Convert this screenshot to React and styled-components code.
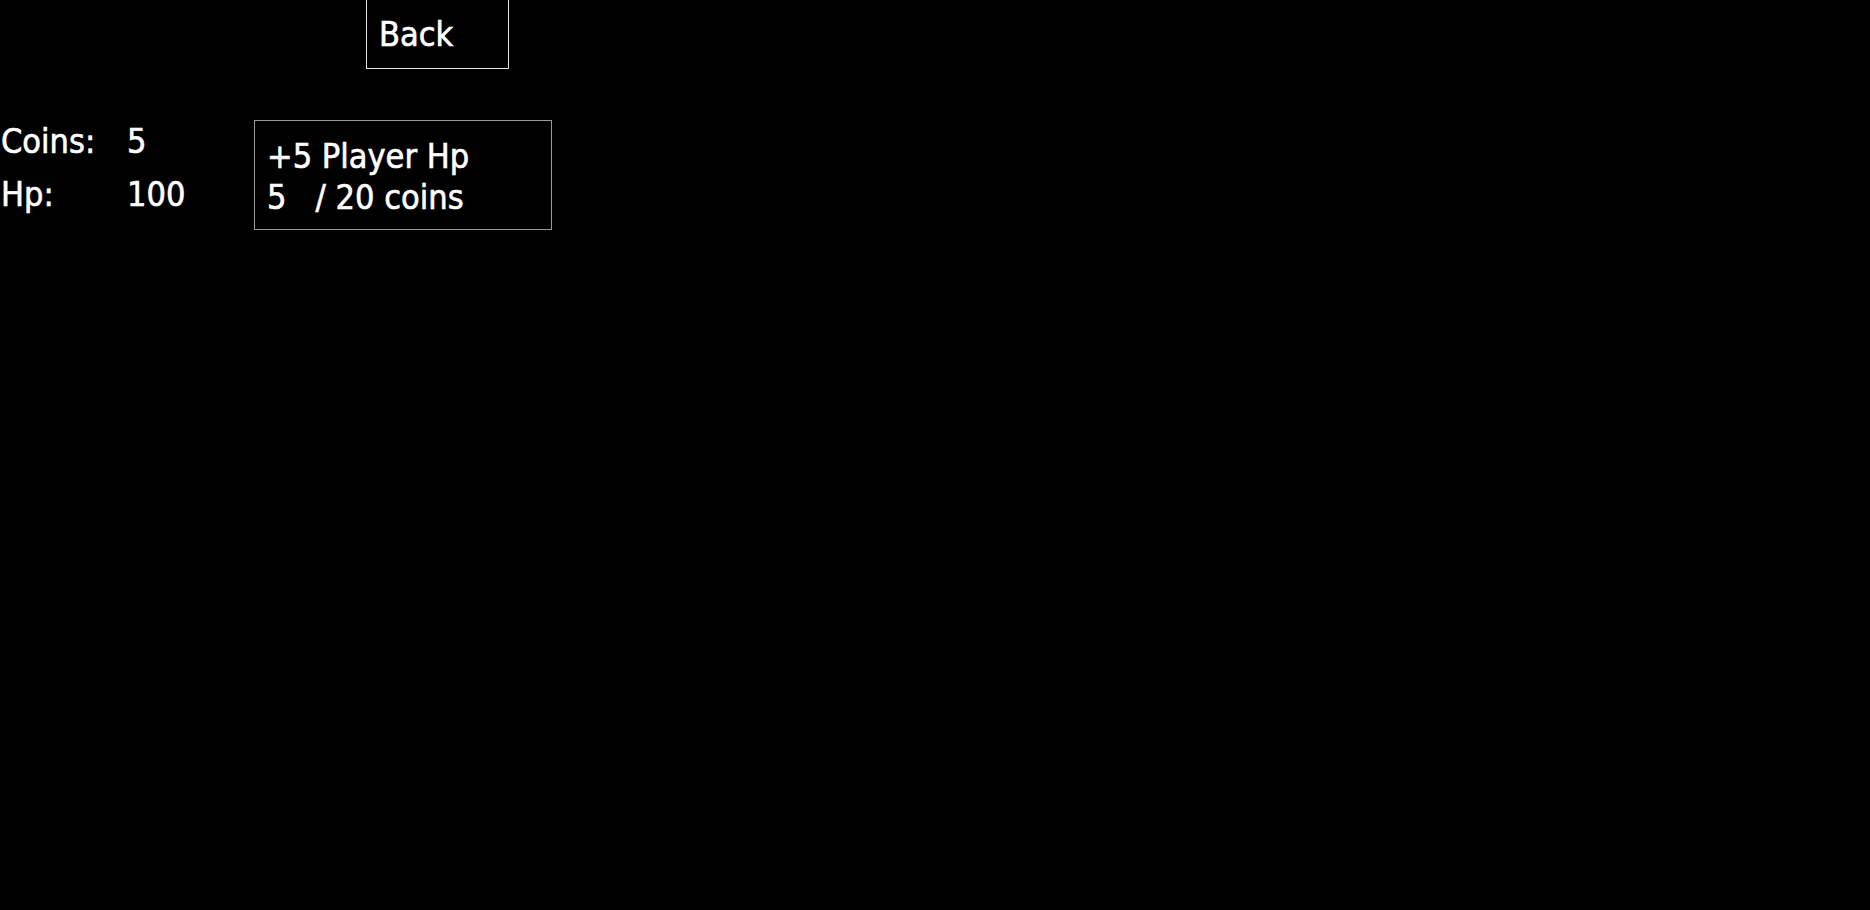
import React from "react";
import styled, { createGlobalStyle } from "styled-components";

const Global = createGlobalStyle`
  html, body {
    margin: 0;
    padding: 0;
    background: #000;
    color: #fff;
    font-family: "DejaVu Sans Condensed", "DejaVu Sans", sans-serif;
  }
  body { min-height: 910px; }
`;

const Page = styled.div`
  display: flex;
  flex-direction: column;
  min-height: 910px;
  background: #000;
  font-size: 34px;
  -webkit-text-stroke: 0.6px #fff;
`;

const Header = styled.div`
  display: flex;
  padding-left: 366px;
`;

const BackButton = styled.button`
  box-sizing: border-box;
  width: 143px;
  height: 69px;
  padding: 14px 0 14px 12px;
  margin: 0;
  background: transparent;
  color: #fff;
  font-family: inherit;
  font-size: 34px;
  line-height: 40px;
  text-align: left;
  border: 1px solid #e6e6e6;
  border-top: none;
  cursor: pointer;
  -webkit-text-stroke: inherit;
`;

const Content = styled.div`
  display: flex;
  align-items: flex-start;
  margin-top: 46px;
`;

const Stats = styled.div`
  display: grid;
  grid-template-columns: 127px auto;
  width: 254px;
  line-height: 53px;
`;

const Cell = styled.div`
  padding-left: ${(p) => (p.$first ? "1px" : "0")};
`;

const ShopCard = styled.div`
  box-sizing: border-box;
  width: 298px;
  height: 110px;
  margin-top: 5px;
  padding: 15px 0 0 12px;
  border: 1px solid #9a9a9a;
  line-height: 41px;
`;

const CardLine = styled.div`
  white-space: pre;
`;

export default function App() {
  return (
    <Page>
      <Global />
      <Header>
        <BackButton>Back</BackButton>
      </Header>
      <Content>
        <Stats>
          <Cell $first>Coins:</Cell>
          <Cell>5</Cell>
          <Cell $first>Hp:</Cell>
          <Cell>100</Cell>
        </Stats>
        <ShopCard>
          <CardLine>+5 Player Hp</CardLine>
          <CardLine>{"5   / 20 coins"}</CardLine>
        </ShopCard>
      </Content>
    </Page>
  );
}
